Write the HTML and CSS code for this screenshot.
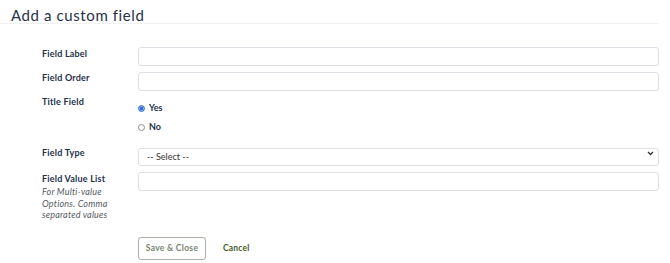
FILE: index.html
```
<!DOCTYPE html>
<html lang="en">
<head>
  <meta charset="UTF-8" />
  <title>Add a custom field</title>
  <link rel="stylesheet" href="styles.css">
</head>
<body>
  <h2 class="page-title">Add a custom field</h2>

  <form class="field-form">
    <div class="form-row row-label">
      <label class="form-label">Field Label</label>
      <input type="text" class="form-input" />
    </div>

    <div class="form-row row-order">
      <label class="form-label">Field Order</label>
      <input type="text" class="form-input" />
    </div>

    <div class="form-row row-title">
      <label class="form-label">Title Field</label>
      <div class="radio-group">
        <label class="radio-item"><input type="radio" name="title" checked /> Yes</label>
        <label class="radio-item"><input type="radio" name="title" /> No</label>
      </div>
    </div>

    <div class="form-row row-type">
      <label class="form-label">Field Type</label>
      <div class="select-wrap">
        <select class="form-input form-select">
          <option>-- Select --</option>
        </select>
        <svg class="select-arrow" width="7" height="5" viewBox="0 0 7 5"><path d="M1 1l2.5 2.5L6 1" fill="none" stroke="#333" stroke-width="1.3"/></svg>
      </div>
    </div>

    <div class="form-row row-values">
      <div class="form-label">
        Field Value List
        <span class="help-text">For Multi-value Options. Comma separated values</span>
      </div>
      <input type="text" class="form-input" />
    </div>

    <div class="form-actions">
      <button type="button" class="btn-save">Save &amp; Close</button>
      <a class="btn-cancel">Cancel</a>
    </div>
  </form>
</body>
</html>
```

FILE: styles.css
```
* {
  margin: 0;
  padding: 0;
  box-sizing: border-box;
}
body {
  font-family: 'Lato', 'Open Sans', sans-serif;
  color: #243049;
  background: #fff;
  padding: 0 11px 0 0;
}
.page-title {
  font-weight: 400;
  font-size: 15px;
  line-height: 18px;
  letter-spacing: 0.6px;
  color: #27324a;
  padding: 6px 0 0 11px;
  height: 24px;
  border-bottom: 1px solid #eef0f2;
}
.field-form {
  padding: 23px 0 0 42px;
}
.form-row {
  display: grid;
  grid-template-columns: 96px 1fr;
  align-items: start;
}
.form-label {
  font-size: 9px;
  font-weight: 700;
  line-height: 12px;
  letter-spacing: 0.2px;
  color: #243049;
  padding-top: 1px;
}
.form-input {
  width: 100%;
  height: 19px;
  border: 1px solid #dcdfe3;
  border-radius: 3px;
  background: #fff;
  font-family: inherit;
  font-size: 9px;
  color: #333;
  padding: 0 8px;
}
.row-label { margin-bottom: 6px; }
.row-order { margin-bottom: 5px; }
.row-order .form-label { padding-top: 0; }
.row-title { margin-bottom: 11px; }
.row-title .form-label { padding-top: 0; }
.radio-group {
  padding-top: 6px;
  display: flex;
  flex-direction: column;
  gap: 7px;
}
.radio-item {
  display: flex;
  align-items: center;
  gap: 4px;
  font-size: 9px;
  font-weight: 700;
  line-height: 12px;
  color: #243049;
}
.radio-item input {
  appearance: none;
  width: 7px;
  height: 7px;
  border: 1px solid #8a8f96;
  border-radius: 50%;
  margin: 0;
}
.radio-item input:checked {
  border-color: #2f6fd0;
  background: radial-gradient(circle, #2f6fd0 0 45%, #8fb3ea 55%);
}
.row-type { margin-bottom: 6px; }
.row-type .form-label { padding-top: 3px; }
.select-wrap {
  position: relative;
}
.form-select {
  appearance: none;
  height: 18px;
  line-height: 16px;
}
.select-arrow {
  position: absolute;
  right: 5px;
  top: 7px;
}
.help-text {
  display: block;
  font-weight: 400;
  font-style: italic;
  font-size: 9px;
  line-height: 11.5px;
  color: #555b63;
  width: 80px;
  margin-top: 1px;
}
.form-actions {
  display: flex;
  align-items: center;
  gap: 17px;
  padding: 16px 0 0 96px;
}
.btn-save {
  width: 68px;
  height: 23px;
  border: 1px solid #a9b3a7;
  border-radius: 3px;
  background: #fff;
  font-family: inherit;
  font-size: 8.5px;
  font-weight: 700;
  letter-spacing: 0.3px;
  color: #77846f;
}
.btn-cancel {
  font-size: 8.5px;
  font-weight: 700;
  color: #4b5a2c;
  letter-spacing: 0.2px;
}
```
